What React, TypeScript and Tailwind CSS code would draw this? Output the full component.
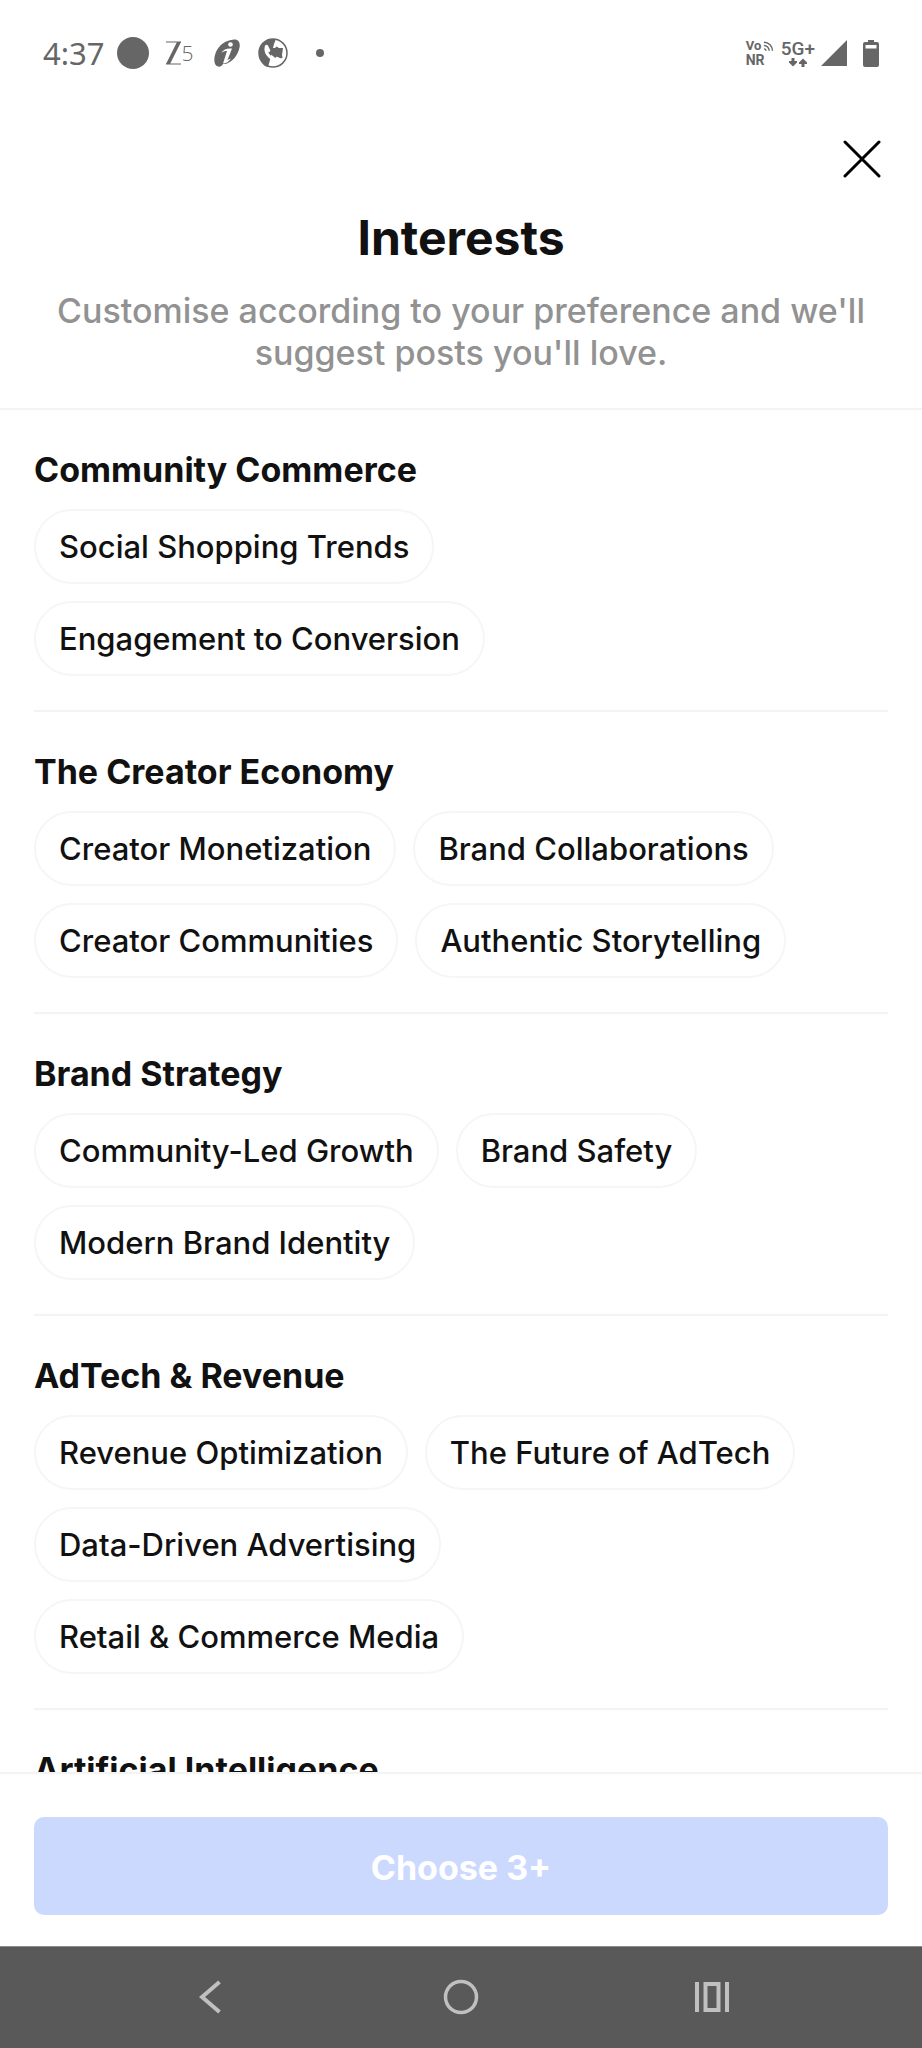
import { useState } from "react";

interface Section {
	title: string;
	topics: string[];
}

const sections: Section[] = [
	{
		title: "Community Commerce",
		topics: ["Social Shopping Trends", "Engagement to Conversion"],
	},
	{
		title: "The Creator Economy",
		topics: [
			"Creator Monetization",
			"Brand Collaborations",
			"Creator Communities",
			"Authentic Storytelling",
		],
	},
	{
		title: "Brand Strategy",
		topics: ["Community-Led Growth", "Brand Safety", "Modern Brand Identity"],
	},
	{
		title: "AdTech & Revenue",
		topics: [
			"Revenue Optimization",
			"The Future of AdTech",
			"Data-Driven Advertising",
			"Retail & Commerce Media",
		],
	},
	{
		title: "Artificial Intelligence",
		topics: [],
	},
];

const StatusBar = () => {
	return (
		<div className="flex h-[106px] shrink-0 items-center justify-between px-[43px] text-[#666666]">
			<div className="flex items-center">
				<span className="font-['Noto_Sans',sans-serif] text-[31px] leading-10">
					4:37
				</span>
				<svg viewBox="0 0 32 32" className="ml-3 size-8" fill="currentColor">
					<circle cx="16" cy="16" r="16" />
				</svg>
				<span className="ml-4 flex items-center">
					<svg viewBox="0 0 17 24" className="h-6 w-[17px]" fill="currentColor">
						<path d="M1 .5h15v1H1zM1 22.5h15v1H1z" />
						<path d="M12 1h4L5 23H1z" />
					</svg>
					<span className="font-['Open_Sans',sans-serif] text-[21px] leading-8 font-light">
						5
					</span>
				</span>
				<svg viewBox="0 0 26 28" className="ml-5 h-7 w-[26px]" fill="currentColor">
					<path d="M20 .5c5-.5 7 4 5 10-2 7-7 12-12 14-2 .8-3 .5-4 .5-1 2-3 3-5 2.500C-.5 26.500-.5 19 2 13 5 6 12 1 20 .5z" />
					<circle cx="16.500" cy="5.500" r="2.300" fill="white" />
					<path d="M7 14c3-4 6-5 11-4.500l-4.500 11.500 3.500-1.500c-2 3-5 5-8 5l4-12.500c-2 0-4 .5-6 2z" fill="white" />
				</svg>
				<svg viewBox="0 0 30 30" className="ml-[18px] size-[30px]" fill="currentColor">
					<circle cx="15" cy="15" r="14" fill="none" stroke="currentColor" strokeWidth="1.500" />
					<path d="M18 1C7 0 1 8 1 15s4 13 9 14l2-7 4-16z" />
					<path d="M13 10h4l1.500-1.500L21 10h4l-1 7 .5 3-6 1-6-5z" />
					<path
						d="M8 10c-.5 3 1 6 3.500 8.500S17 22.500 21 22"
						fill="none"
						stroke="white"
						strokeWidth="3"
						strokeLinecap="round"
					/>
					<path d="M8.500 8.500l2 4M19 20.500l3 1.500" stroke="white" strokeWidth="3.500" strokeLinecap="round" />
				</svg>
				<svg viewBox="0 0 8 8" className="ml-[28px] size-2" fill="currentColor">
					<circle cx="4" cy="4" r="4" />
				</svg>
			</div>

			<div className="flex items-center font-['Roboto',sans-serif]">
				<div className="flex w-7 flex-col">
					<div className="flex items-center gap-0.5">
						<span className="text-[13px] leading-[14px] font-bold">Vo</span>
						<svg viewBox="0 0 11 11" className="size-[11px]" fill="none" stroke="currentColor" strokeWidth="1.500">
							<path d="M1 1c5 0 9 4 9 9M1 4.500c3 0 5.500 2.500 5.500 5.500M1 8c1 0 2 1 2 2" />
						</svg>
					</div>
					<span className="text-[14px] leading-[14px] font-bold">NR</span>
				</div>
				<div className="ml-[7px] flex flex-col items-center">
					<span className="text-[19px] leading-[18px] font-medium">5G+</span>
					<svg viewBox="0 0 18 9" className="h-[9px] w-[18px]" fill="currentColor">
						<path d="M2.500 0h3v3H8v1.500L4 8.500 0 4.500V3h2.500zM12.500 9h3V6H18V4.500L14 .5l-4 4V6h2.500z" />
					</svg>
				</div>
				<svg viewBox="0 0 26 26" className="ml-[6px] size-[26px]" fill="currentColor">
					<path d="M26 0v26H0z" />
				</svg>
				<svg viewBox="0 0 16 27" className="ml-4 h-[27px] w-4" fill="currentColor" fillRule="evenodd">
					<path d="M5 0h6v2h3a2 2 0 0 1 2 2v21a2 2 0 0 1-2 2H2a2 2 0 0 1-2-2V4a2 2 0 0 1 2-2h3zM2.500 5v3.500h11V5z" />
				</svg>
			</div>
		</div>
	);
};

const TopicPill = ({ label }: { label: string }) => {
	const [selected, setSelected] = useState(false);

	return (
		<button
			type="button"
			aria-pressed={selected}
			onClick={() => setSelected(!selected)}
			className={`h-[75px] rounded-full border-2 px-[23px] text-[31px] leading-10 font-medium ${
				selected ? "border-[#6b8cff]" : "border-[#f6f6f6]"
			}`}
		>
			{label}
		</button>
	);
};

const NavigationBar = () => {
	return (
		<nav className="flex h-[102px] shrink-0 items-center border-t border-[#8a8a8a] bg-[#595959] px-[84px] pb-0.5 text-[#c0c0c0]">
			<button type="button" aria-label="Back" className="flex flex-1 justify-center">
				<svg viewBox="0 0 22 34" className="h-[34px] w-[22px]" fill="none" stroke="currentColor" strokeWidth="4">
					<path d="M20.500 2 3 17l17.500 15" />
				</svg>
			</button>
			<button type="button" aria-label="Home" className="flex flex-1 justify-center">
				<svg viewBox="0 0 36 36" className="size-9" fill="none" stroke="currentColor" strokeWidth="3.500">
					<circle cx="18" cy="18" r="15.500" />
				</svg>
			</button>
			<button type="button" aria-label="Recent apps" className="flex flex-1 justify-center">
				<svg viewBox="0 0 36 32" className="h-8 w-9" fill="none" stroke="currentColor" strokeWidth="4">
					<path d="M3 1v30M33 1v30M11.500 3h13v26h-13z" />
				</svg>
			</button>
		</nav>
	);
};

const App = () => {
	return (
		<div className="flex h-screen flex-col bg-white font-['Inter',sans-serif] text-[#111111]">
			<StatusBar />

			<header className="flex shrink-0 flex-col border-b-2 border-[#f3f3f3] px-10 pb-[34px] text-center">
				<button type="button" aria-label="Close" className="mt-8 self-end">
					<svg viewBox="0 0 40 40" className="size-10" stroke="black" strokeWidth="3" strokeLinecap="round">
						<path d="M3 4l34 34M37 4 3 38" />
					</svg>
				</button>
				<h1 className="mt-8 text-[48px] leading-[56px] font-bold">Interests</h1>
				<p className="mt-6 text-[34px] leading-[42px] font-medium text-[#929292]">
					Customise according to your preference and we'll suggest posts you'll love.
				</p>
			</header>

			<main className="min-h-0 flex-1 overflow-hidden px-[34px]">
				{sections.map((section) => (
					<section key={section.title} className="border-b-2 border-[#f3f3f3] pt-10 pb-[34px]">
						<h2 className="text-[34px] leading-10 font-bold">{section.title}</h2>
						<div className="mt-[19px] flex flex-wrap gap-[17px] pr-12">
							{section.topics.map((topic) => (
								<TopicPill key={topic} label={topic} />
							))}
						</div>
					</section>
				))}
			</main>

			<footer className="shrink-0 border-t-2 border-[#f3f3f3] px-[34px] pt-[43px] pb-[31px]">
				<button
					type="button"
					disabled
					className="h-[98px] w-full rounded-[10px] bg-[#ccd9fe] pt-1 text-[34px] leading-10 font-bold text-white"
				>
					Choose 3+
				</button>
			</footer>

			<NavigationBar />
		</div>
	);
};

export default App;
